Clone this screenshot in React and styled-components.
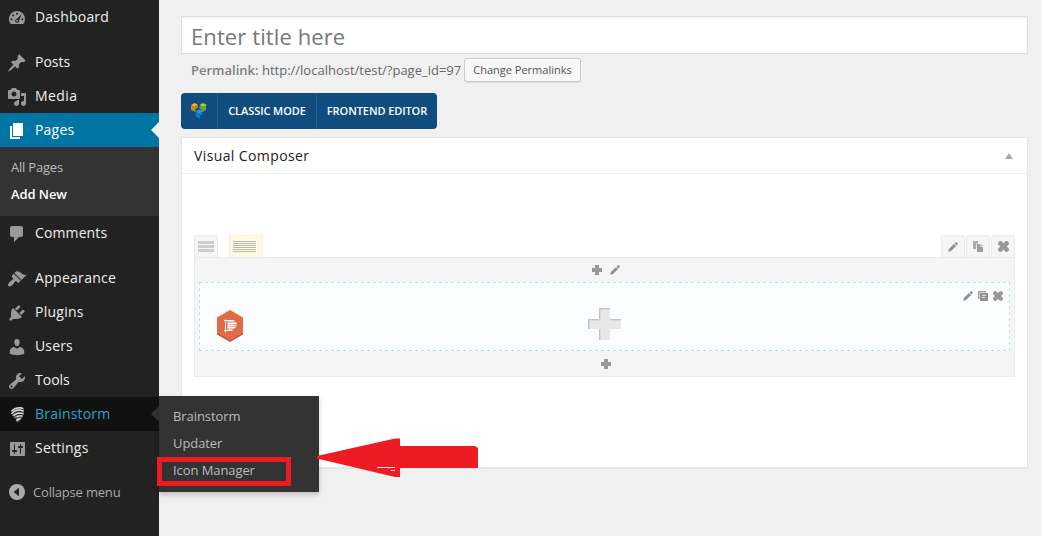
import React from "react";
import styled, { createGlobalStyle, css } from "styled-components";

const GlobalStyle = createGlobalStyle`
  * { box-sizing: border-box; }
  html, body { margin: 0; background: #fff; overflow: hidden; }
  body { font: 13px/18px "Open Sans", sans-serif; color: #444; }
`;

const Page = styled.div`
  display: flex;
  width: 1041px;
  height: 536px;
  background: #f0f0f0;
`;

const Sidebar = styled.nav`
  width: 159px;
  flex: none;
  background: #222;
`;

const MenuGroup = styled.div`
  display: flex;
  flex-direction: column;
  margin-bottom: ${(p) => p.$gap ?? 11}px;
`;

const MenuItem = styled.div`
  position: relative;
  display: flex;
  align-items: center;
  height: 34px;
  padding: 0 0 0 7px;
  gap: 8px;
  font-size: 14px;
  letter-spacing: ${(p) => p.$tracking ?? 0}px;
  color: #eee;
  svg.icon { position: relative; top: 1px; flex: none; fill: #999; }
  ${(p) => p.$state === "current" && css`
    background: #0074a2;
    color: #fff;
    svg.icon { fill: #fff; }
  `}
  ${(p) => p.$state === "open" && css`
    background: #111;
    color: #2ea2cc;
  `}
`;

const ItemArrow = styled.span`
  position: absolute;
  right: 0;
  top: 9px;
  border: 8px solid transparent;
  border-left: 0;
  border-right-color: ${(p) => p.$color};
`;

const SubMenu = styled.div`
  height: 69px;
  padding: 7px 11px;
  background: #333;
`;

const SubItem = styled.div`
  height: 27px;
  line-height: 27px;
  font-size: 13px;
  color: ${(p) => (p.$active ? "#fff" : "#bbb")};
  font-weight: ${(p) => (p.$active ? 600 : 400)};
  letter-spacing: ${(p) => p.$tracking ?? -0.08}px;
`;

const Flyout = styled.div`
  position: absolute;
  left: 159px;
  top: -1px;
  width: 160px;
  height: 96px;
  padding: 7px 14px;
  background: #333;
  box-shadow: 0 3px 5px rgba(0, 0, 0, 0.2);
  z-index: 2;
`;

const Collapse = styled.div`
  display: flex;
  align-items: center;
  height: 34px;
  padding-left: 7px;
  gap: 6px;
  letter-spacing: -0.19px;
  color: #aaa;
  svg { flex: none; }
`;

const Main = styled.main`
  flex: 1;
  display: flex;
  flex-direction: column;
  padding: 16px 13px 0 22px;
`;

const TitleField = styled.div`
  height: 38px;
  padding-left: 9px;
  border: 1px solid #ddd;
  box-shadow: inset 0 1px 2px rgba(0, 0, 0, 0.07);
  background: #fff;
  font-size: 22px;
  line-height: 39px;
  letter-spacing: 0.1px;
  color: #777;
`;

const Permalink = styled.div`
  display: flex;
  align-items: center;
  height: 24px;
  margin: 4px 0 11px;
  padding-left: 10px;
  color: #666;
  white-space: pre;
  b { font-weight: 600; color: #808080; }
`;

const PermalinkText = styled.span`
  width: 273px;
`;

const SmallButton = styled.button`
  width: 117px;
  height: 24px;
  padding: 0;
  border: 1px solid #ccc;
  border-radius: 3px;
  background: #f7f7f7;
  box-shadow: inset 0 1px 0 #fff, 0 1px 0 rgba(0, 0, 0, 0.08);
  font: 11px/22px "Open Sans", sans-serif;
  color: #555;
`;

const ModeBar = styled.div`
  display: flex;
  width: 256px;
  height: 36px;
  border-radius: 4px;
  background: #114c7e;
  overflow: hidden;
`;

const ModeCell = styled.div`
  display: flex;
  align-items: center;
  justify-content: center;
  width: ${(p) => p.$width}px;
  font-size: 11px;
  font-weight: 600;
  letter-spacing: -0.08px;
  color: #fff;
  white-space: nowrap;
  & + & { border-left: 1px solid #24608f; }
`;

const Panel = styled.section`
  height: 331px;
  margin-top: 8px;
  border: 1px solid #e5e5e5;
  box-shadow: 0 1px 1px rgba(0, 0, 0, 0.04);
  background: #fff;
`;

const PanelHeader = styled.header`
  display: flex;
  align-items: center;
  justify-content: space-between;
  height: 36px;
  padding: 0 14px 0 12px;
  border-bottom: 1px solid #eee;
  font-size: 14px;
  letter-spacing: 0.39px;
  color: #222;
`;

const Builder = styled.div`
  padding: 61px 12px 0;
`;

const TabStrip = styled.div`
  display: flex;
  align-items: flex-end;
  height: 22px;
  gap: 1px;
`;

const Tab = styled.div`
  display: flex;
  align-items: center;
  justify-content: center;
  width: 24px;
  height: 22px;
  border: 1px solid #ebebeb;
  border-bottom: 0;
  border-radius: 3px 3px 0 0;
  background: #f5f5f5;
`;

const NoteTab = styled(Tab)`
  width: 34px;
  margin: 0 auto 0 10px;
  justify-content: flex-start;
  padding-left: 3px;
  border-color: #fbecd2;
  border-radius: 0;
  background: #fff8e2;
`;

const Row = styled.div`
  height: 120px;
  padding: 0 4px;
  border: 1px solid #ebebeb;
  background: #f5f5f5;
`;

const RowControls = styled.div`
  display: flex;
  align-items: center;
  justify-content: center;
  height: ${(p) => p.$height}px;
  gap: 8px;
  padding-left: 2px;
`;

const dash = "#b8e0ee 0 3px, transparent 3px 6px";

const Column = styled.div`
  display: grid;
  grid-template-columns: 1fr 34px 1fr;
  height: 69px;
  padding: 1px 7px;
  background:
    repeating-linear-gradient(90deg, ${dash}) 0 0 / 100% 1px no-repeat,
    repeating-linear-gradient(90deg, ${dash}) 0 100% / 100% 1px no-repeat,
    repeating-linear-gradient(180deg, ${dash}) 0 0 / 1px 100% no-repeat,
    repeating-linear-gradient(180deg, ${dash}) 100% 0 / 1px 100% no-repeat,
    #fafcfe;
`;

const ColumnTools = styled.div`
  display: flex;
  justify-self: end;
  gap: 5px;
  padding-top: 8px;
`;

const Badge = styled.div`
  padding: 27px 0 0 11px;
`;

const AddBlock = styled.div`
  padding-top: 25px;
`;

const Highlight = styled.div`
  position: absolute;
  left: 157px;
  top: 457px;
  width: 134px;
  height: 29px;
  border: 5px solid #ed1c24;
  z-index: 3;
`;

const Pointer = styled.svg`
  position: absolute;
  left: 317px;
  top: 437px;
  z-index: 3;
`;

const paths = {
  post: "M10.44 3.02l1.82-1.82 6.36 6.35-1.83 1.82c-1.05-.68-2.48-.57-3.41.36l-.75.75c-.92.93-1.04 2.35-.35 3.41l-1.83 1.82-2.41-2.41-2.8 2.79c-.42.42-3.38 2.71-3.8 2.29s1.86-3.39 2.28-3.81l2.79-2.79L4.1 9.36l1.83-1.82c1.05.69 2.48.57 3.4-.36l.75-.75c.93-.92 1.05-2.35.36-3.41z",
  media: "M13 11V4c0-.55-.45-1-1-1h-1.67L9 1H5L3.67 3H2c-.55 0-1 .45-1 1v7c0 .55.45 1 1 1h10c.55 0 1-.45 1-1zM7 4.5c1.38 0 2.5 1.12 2.5 2.5S8.38 9.5 7 9.5 4.5 8.38 4.5 7 5.62 4.5 7 4.5zM14 6h5v10.5c0 1.38-1.12 2.5-2.5 2.5S14 17.88 14 16.5s1.12-2.5 2.5-2.5c.17 0 .34.02.5.05V9h-3V6zm-4 8.05V13h2v3.5c0 1.38-1.12 2.5-2.5 2.5S7 17.88 7 16.5 8.12 14 9.5 14c.17 0 .34.02.5.05z",
  page: "M6 15V2h10v13H6zm-1 1h8v2H3V5h2v11z",
  comments: "M5 2h9c1.1 0 2 .9 2 2v7c0 1.1-.9 2-2 2h-2l-5 5v-5H5c-1.1 0-2-.9-2-2V4c0-1.1.9-2 2-2z",
  appearance: "M14.48 11.06L7.41 3.99l1.5-1.5c.5-.56 2.3-.47 3.51.32 1.21.8 1.43 1.28 2.91 2.1 1.18.64 2.45 1.26 4.45.85zm-.71.71L6.7 4.7 4.93 6.47c-.39.39-.39 1.02 0 1.41l1.06 1.06c.39.39.39 1.03 0 1.42-.6.6-1.43 1.11-2.21 1.69-.35.26-.7.53-1.01.84C1.43 14.23.4 16.08 1.4 17.07c.99 1 2.84-.03 4.18-1.36.31-.31.58-.66.85-1.02.57-.78 1.08-1.61 1.69-2.21.39-.39 1.02-.39 1.41 0l1.06 1.06c.39.39 1.02.39 1.41 0z",
  plugins: "M13.11 4.36L9.87 7.6 8 5.73l3.24-3.24c.35-.34 1.05-.2 1.56.32.52.51.66 1.21.31 1.55zm-8 1.77l.91-1.12 9.01 9.01-1.19.84c-.71.71-2.63 1.16-3.82 1.16H6.14L4.9 17.26c-.59.59-1.54.59-2.12 0-.59-.58-.59-1.53 0-2.12l1.24-1.24v-3.88c0-1.13.4-3.19 1.09-3.89zm7.26 3.97l3.24-3.24c.34-.35 1.04-.21 1.55.31.52.51.66 1.21.31 1.55l-3.24 3.25z",
  users: "M10 9.25c-2.27 0-2.73-3.44-2.73-3.44C7 4.02 7.82 2 9.97 2c2.16 0 2.98 2.02 2.71 3.81 0 0-.41 3.44-2.68 3.44zm0 2.57L12.72 10c2.39 0 4.52 2.33 4.52 4.53v2.49s-3.65 1.13-7.24 1.13c-3.65 0-7.24-1.13-7.24-1.13v-2.49c0-2.25 1.94-4.48 4.47-4.48z",
  tools: "M16.68 9.77c-1.34 1.34-3.3 1.67-4.95.99l-5.41 6.52c-.99.99-2.59.99-3.58 0s-.99-2.59 0-3.57l6.52-5.42c-.68-1.65-.35-3.61.99-4.95 1.28-1.28 3.12-1.62 4.72-1.06l-2.89 2.89 2.82 2.82 2.86-2.87c.53 1.58.18 3.39-1.08 4.65zM3.81 16.21c.4.39 1.04.39 1.43 0 .4-.4.4-1.04 0-1.43-.39-.4-1.03-.4-1.43 0-.39.39-.39 1.03 0 1.43z",
  settings: "M18 16V4c0-.55-.45-1-1-1H4c-.55 0-1 .45-1 1v12c0 .55.45 1 1 1h13c.55 0 1-.45 1-1zM8 11h1c.55 0 1 .45 1 1s-.45 1-1 1H8v1.5c0 .28-.22.5-.5.5s-.5-.22-.5-.5V13H6c-.55 0-1-.45-1-1s.45-1 1-1h1V5.500c0-.28.22-.5.5-.5s.5.22.5.5V11zm5-2h-1c-.55 0-1-.45-1-1s.45-1 1-1h1V5.500c0-.28.22-.5.5-.5s.5.22.5.5V7h1c.55 0 1 .45 1 1s-.45 1-1 1h-1v5.500c0 .28-.22.5-.5.5s-.5-.22-.5-.5V9z",
};

const MenuIcon = ({ name }) => (
  <svg className="icon" width="20" height="20" viewBox="0 0 20 20">
    <path fillRule="evenodd" d={paths[name]} />
  </svg>
);

const DashboardIcon = () => (
  <svg className="icon" width="20" height="20" viewBox="0 0 20 20">
    <path d="M3.76 16h12.48A8 8 0 0 0 18 11a8 8 0 1 0-16 0c0 1.89.66 3.63 1.76 5z" />
    <g fill="#222">
      <circle cx="10" cy="5.700" r="1" />
      <circle cx="6.100" cy="7.400" r="1" />
      <circle cx="4.600" cy="11.200" r="1" />
      <circle cx="15.400" cy="11.200" r="1" />
      <path d="M14.600 6.200l-2.500 6.200c.3 1.300-.7 2.300-2 2.300-1.400 0-2.300-1.300-1.900-2.500.2-.7.700-1.100 1.400-1.300z" />
    </g>
    <circle cx="10" cy="12.700" r=".9" />
  </svg>
);

const StormIcon = () => (
  <svg className="icon" width="20" height="20" viewBox="0 0 20 20">
    <path fill="#777" d="M4.500 5.500L8 2.500l6-.5 3 2-.3 5-1.700 4-4.500 4.500L8.500 14 5 10.500z" />
    <g fill="none" stroke="#111" strokeWidth=".9">
      <path d="M4 7.300C7 4.300 12 3 16.500 4.600" />
      <path d="M4.300 10.200C7 6.900 12 5.600 16.500 7.300" />
      <path d="M6 12.400C8.500 9.600 12 8.600 16.500 10" />
      <path d="M8 14.300c2-1.900 4-2.800 7-2.500" />
    </g>
    <g fill="none" stroke="#ddd" strokeWidth="1.300" strokeLinecap="round">
      <path d="M4.800 5.700C7.500 3 12.500 2 15.800 3.400" />
      <path d="M4.800 8.600C7.500 5.300 12 4.300 16 5.900" />
      <path d="M7 10.400c2-1.800 5.500-2.900 9-1.700" />
      <path d="M10 11.900c1.500-.9 3.500-1.300 5-.8" />
      <path d="M9.800 15.200l3.200-1.600" />
    </g>
  </svg>
);

const Pencil = ({ size = 11 }) => (
  <svg width={size} height={size} viewBox="0 0 11 11" fill="#8f8f8f">
    <path d="M.3 10.700l.7-3 5.600-5.600 2.300 2.300-5.600 5.600zM7.200 1.600L8.500.400q.6-.4 1.100 0l1 1q.4.5 0 1.100L9.400 3.800z" />
  </svg>
);

const Copy = () => (
  <svg width="11" height="11" viewBox="0 0 11 11">
    <path fill="#aaa" d="M0 0h5v2.500H3.200V8H0z" />
    <path fill="#9c9c9c" d="M4 3h3.200v3H10v5H4zM7.800 3L10 5.300H7.800z" />
  </svg>
);

const CopySmall = () => (
  <svg width="10" height="11" viewBox="0 0 10 11">
    <path fill="#a2a2a2" d="M0 0h8v1.500H1.500V8H0z" />
    <path fill="#959595" d="M2 2h8v8H2z" />
    <path stroke="#ddd" d="M4 4.500h4M4 6.500h3" />
  </svg>
);

const Cross = ({ size = 11 }) => (
  <svg width={size} height={size} viewBox="0 0 11 11" fill="#999">
    <path d="M0 1.800L1.800 0h1.400l2.300 2.300L7.800 0h1.400L11 1.800v1.400L8.700 5.500 11 7.800v1.400L9.200 11H7.800L5.500 8.700 3.200 11H1.800L0 9.200V7.800l2.300-2.300L0 3.200z" />
  </svg>
);

const Plus = () => (
  <svg width="10" height="10" viewBox="0 0 10 10" fill="#999">
    <path d="M3 0h4v3h3v4H7v3H3V7H0V3h3z" />
  </svg>
);

const LargePlus = () => (
  <svg width="33" height="32" viewBox="0 0 33 32">
    <path fill="#e8e8e8" d="M11 0h11v11h11v10H22v11H11V21H0V11h11z" />
    <path fill="none" stroke="#c2c2c2" d="M11.500 11V.500H22M.500 21V11.500h11M22 11.500h11M11.500 21v11" />
    <path fill="none" stroke="#dadada" d="M12.500 12V1.500H22M1.500 21v-8.500h11M22 12.500h11M12.500 21v11" />
  </svg>
);

const ComposerLogo = () => (
  <svg width="16" height="16" viewBox="0 0 16 16">
    <path fill="#f9b020" d="M0 2L3.500 0 7 1.800 3.500 4z" />
    <path fill="#c98a17" d="M0 2.500l3.500 1.500L7 2.500v2L4.500 6v3L0 7z" />
    <path fill="#a7d03e" d="M8.500 2L12 0l4 2-3.500 2z" />
    <path fill="#759f3a" d="M8.500 2.500l4 1.500 2.500-1.200V7l-3.500 2L10 6.500 8.500 6z" />
    <path fill="#12a7ec" d="M4.500 8.500L8 6.500l4 2-4 2z" />
    <path fill="#0784c4" d="M4.500 9L8 10.500 11.500 9v2L8.800 12.500V16L4.500 13z" />
  </svg>
);

const HexBadge = () => (
  <svg width="26" height="33" viewBox="0 0 26 33">
    <path fill="#b9553a" d="M13 1l13 7.500v16l-13 7.500-13-7.500v-16z" />
    <path fill="#e16b47" d="M13 0L26 7.500v15.500L13 30.500 0 23V7.500z" />
    <path fill="none" stroke="#fff" d="M8.500 9.500v13M7 10.500h4M7 20.500h4" />
    <path fill="#f3bfae" d="M10.500 10h7v2h2v5h-2v2h-2v2h-5z" />
    <path stroke="#fff" d="M10.500 10.500h6M10.500 13.500h9M10.500 15.500h6M10.500 17.500h8M10.500 20.500h5" />
  </svg>
);

export default function App() {
  return (
    <>
      <GlobalStyle />
      <Page>
        <Sidebar>
          <MenuGroup>
            <MenuItem $tracking={0.2}><DashboardIcon />Dashboard</MenuItem>
          </MenuGroup>
          <MenuGroup>
            <MenuItem><MenuIcon name="post" />Posts</MenuItem>
            <MenuItem $tracking={0.4}><MenuIcon name="media" />Media</MenuItem>
            <MenuItem $state="current" $tracking={0.2}>
              <MenuIcon name="page" />Pages<ItemArrow $color="#f0f0f0" />
            </MenuItem>
            <SubMenu>
              <SubItem $tracking={-0.2}>All Pages</SubItem>
              <SubItem $active>Add New</SubItem>
            </SubMenu>
            <MenuItem $tracking={0.12}><MenuIcon name="comments" />Comments</MenuItem>
          </MenuGroup>
          <MenuGroup $gap={10}>
            <MenuItem $tracking={0.3}><MenuIcon name="appearance" />Appearance</MenuItem>
            <MenuItem $tracking={0.25}><MenuIcon name="plugins" />Plugins</MenuItem>
            <MenuItem $tracking={0.15}><MenuIcon name="users" />Users</MenuItem>
            <MenuItem><MenuIcon name="tools" />Tools</MenuItem>
            <MenuItem $state="open" $tracking={0.2}>
              <StormIcon />Brainstorm<ItemArrow $color="#333" />
              <Flyout>
                <SubItem>Brainstorm</SubItem>
                <SubItem>Updater</SubItem>
                <SubItem>Icon Manager</SubItem>
              </Flyout>
            </MenuItem>
            <MenuItem $tracking={0.2}><MenuIcon name="settings" />Settings</MenuItem>
          </MenuGroup>
          <Collapse>
            <svg width="20" height="20" viewBox="0 0 20 20">
              <circle cx="10" cy="10" r="8" fill="#aaa" />
              <path fill="#222" d="M12 5.800v8.400L6.500 10z" />
            </svg>
            Collapse menu
          </Collapse>
        </Sidebar>
        <Main>
          <TitleField>Enter title here</TitleField>
          <Permalink>
            <PermalinkText><b>Permalink:</b> http://localhost/test/?page_id=97</PermalinkText>
            <SmallButton>Change Permalinks</SmallButton>
          </Permalink>
          <ModeBar>
            <ModeCell $width={36}><ComposerLogo /></ModeCell>
            <ModeCell $width={99}>CLASSIC MODE</ModeCell>
            <ModeCell $width={121}>FRONTEND EDITOR</ModeCell>
          </ModeBar>
          <Panel>
            <PanelHeader>
              Visual Composer
              <svg width="8" height="6" viewBox="0 0 8 6"><path fill="#aaa" d="M4 0l4 6H0z" /></svg>
            </PanelHeader>
            <Builder>
              <TabStrip>
                <Tab>
                  <svg width="16" height="11" viewBox="0 0 16 11">
                    <path stroke="#cecece" strokeWidth="3" d="M0 1.500h16M0 5.500h16M0 9.500h16" />
                  </svg>
                </Tab>
                <NoteTab>
                  <svg width="23" height="11" viewBox="0 0 23 11">
                    <path stroke="#b8b8b0" d="M0 .500h23M0 2.500h23M0 4.500h23M0 6.500h23M0 8.500h23M0 10.500h23" />
                  </svg>
                </NoteTab>
                <Tab><Pencil size={10} /></Tab>
                <Tab><Copy /></Tab>
                <Tab><Cross /></Tab>
              </TabStrip>
              <Row>
                <RowControls $height={24}><Plus /><Pencil size={10} /></RowControls>
                <Column>
                  <Badge><HexBadge /></Badge>
                  <AddBlock><LargePlus /></AddBlock>
                  <ColumnTools><Pencil size={10} /><CopySmall /><Cross size={10} /></ColumnTools>
                </Column>
                <RowControls $height={25}><Plus /></RowControls>
              </Row>
            </Builder>
          </Panel>
        </Main>
      </Page>
      <Highlight />
      <Pointer width="162" height="42" viewBox="0 0 162 42">
        <path fill="#ed1c24" d="M0 19L78 1.500h5V9h75l3 2v20H83v9h-5L0 21.500z" />
        <path stroke="#eee" d="M60 30.500h18M74 33.500h4" />
      </Pointer>
    </>
  );
}
